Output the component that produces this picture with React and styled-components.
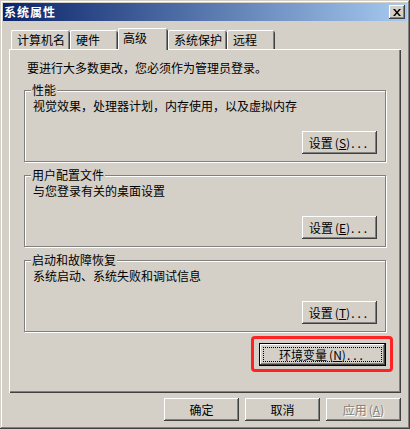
import React from 'react';
import styled, { createGlobalStyle } from 'styled-components';

const FACE = '#d4d0c8';
const FONT = `"Noto Sans CJK SC", "Noto Sans", sans-serif`;

const GlobalStyle = createGlobalStyle`
  html, body {
    margin: 0;
    padding: 0;
    background: ${FACE};
  }
  body {
    font-family: ${FONT};
    font-size: 12px;
    color: #000;
  }
`;

// outer window frame
const Window = styled.div`
  box-sizing: border-box;
  width: 410px;
  height: 429px;
  padding: 3px;
  display: flex;
  flex-direction: column;
  background: ${FACE};
  box-shadow: inset -1px -1px #404040, inset 1px 1px ${FACE},
    inset -2px -2px #808080, inset 2px 2px #fff;
`;

const TitleBar = styled.div`
  height: 18px;
  display: flex;
  align-items: center;
  justify-content: space-between;
  padding: 0 2px 0 1px;
  background: linear-gradient(to right, #0a246a, #a6caf0);
`;

const Title = styled.span`
  color: #fff;
  font-weight: 700;
  font-size: 12px;
  letter-spacing: 1px;
  line-height: 18px;
`;

const CloseButton = styled.div`
  box-sizing: border-box;
  width: 16px;
  height: 14px;
  display: flex;
  align-items: center;
  justify-content: center;
  background: ${FACE};
  box-shadow: inset -1px -1px #404040, inset 1px 1px #fff,
    inset -2px -2px #808080;
`;

const Body = styled.div`
  flex: 1;
  display: flex;
  flex-direction: column;
  padding: 7px 6px 0 6px;
`;

const TabStrip = styled.div`
  position: relative;
  z-index: 1;
  height: 21px;
  display: flex;
  align-items: flex-end;
  padding-left: 2px;
`;

const Tab = styled.div`
  box-sizing: border-box;
  height: ${p => (p.$active ? 22 : 19)}px;
  min-width: ${p => (p.$active ? 50 : 48)}px;
  margin-bottom: ${p => (p.$active ? -1 : 0)}px;
  padding: ${p => (p.$active ? '0 5px 2px 5px' : '0 5px 0 6px')};
  display: flex;
  align-items: center;
  white-space: nowrap;
  line-height: 14px;
  background: ${FACE};
  border-radius: 2px 2px 0 0;
  box-shadow: inset 1px 0 #fff, inset 0 1px #fff, inset -1px 0 #404040,
    inset -2px 0 #808080;
`;

// the tab page
const Panel = styled.div`
  box-sizing: border-box;
  height: 344px;
  display: flex;
  flex-direction: column;
  padding: 12px 15px 0;
  background: ${FACE};
  box-shadow: inset 1px 1px #fff, inset -1px -1px #404040,
    inset -2px -2px #808080;
`;

const Intro = styled.p`
  margin: 0 0 0 3px;
  line-height: 14px;
`;

const Group = styled.fieldset`
  margin: ${p => (p.$first ? 8 : 6)}px 0 0;
  padding: 0;
  min-width: 0;
  border: 1px solid #808080;
  box-shadow: 1px 1px 0 #fff, inset 1px 1px 0 #fff;
`;

const Legend = styled.legend`
  margin-left: 6px;
  padding: 0 1px;
  line-height: 14px;
  background: ${FACE};
`;

const GroupBody = styled.div`
  display: flex;
  flex-direction: column;
  padding: 2px 8px 7px 8px;
`;

const GroupText = styled.div`
  line-height: 14px;
`;

const ButtonRow = styled.div`
  display: flex;
  justify-content: flex-end;
  margin-top: ${p => p.$gap || 0}px;
`;

const Button = styled.button`
  position: relative;
  box-sizing: border-box;
  width: ${p => p.$width || 75}px;
  height: 23px;
  padding: 0;
  display: flex;
  align-items: center;
  justify-content: center;
  font-family: ${FONT};
  font-size: 12px;
  line-height: 14px;
  white-space: nowrap;
  color: ${p => (p.disabled ? '#808080' : '#000')};
  text-shadow: ${p => (p.disabled ? '1px 1px 0 #fff' : 'none')};
  background: ${FACE};
  border: ${p => (p.$default ? '1px solid #000' : 'none')};
  box-shadow: inset -1px -1px #404040, inset 1px 1px #fff,
    inset -2px -2px #808080;

  ${p =>
    p.$default &&
    `&::before {
      content: '';
      position: absolute;
      inset: 3px;
      border: 1px dotted #000;
    }`}
`;

const Mnemonic = styled.span`
  margin-left: 2px;
`;

const Dots = styled.span`
  letter-spacing: 3px;
  margin-left: 1px;
`;

// red annotation drawn around the env vars button
const Highlight = styled.div`
  position: relative;
  display: flex;

  &::after {
    content: '';
    position: absolute;
    inset: -7px -7px -6px -8px;
    border: 3px solid #ff2222;
    border-radius: 4px;
    pointer-events: none;
  }
`;

const Footer = styled.div`
  display: flex;
  justify-content: flex-end;
  gap: 6px;
  margin-top: 5px;
`;

const Key = ({ children }) => (
  <Mnemonic>
    (<u>{children}</u>)
  </Mnemonic>
);

const tabs = ['计算机名', '硬件', '高级', '系统保护', '远程'];

const groups = [
  { title: '性能', text: '视觉效果，处理器计划，内存使用，以及虚拟内存', key: 'S' },
  { title: '用户配置文件', text: '与您登录有关的桌面设置', key: 'E' },
  { title: '启动和故障恢复', text: '系统启动、系统失败和调试信息', key: 'T' },
];

const App = () => (
  <>
    <GlobalStyle />
    <Window>
      <TitleBar>
        <Title>系统属性</Title>
        <CloseButton>
          <svg width="8" height="7" viewBox="0 0 8 7">
            <path d="M0 0h2l2 2.4L6 0h2L5 3.5 8 7H6L4 4.6 2 7H0l3-3.5z" fill="#000" />
          </svg>
        </CloseButton>
      </TitleBar>
      <Body>
        <TabStrip>
          {tabs.map(t => (
            <Tab key={t} $active={t === '高级'}>
              {t}
            </Tab>
          ))}
        </TabStrip>
        <Panel>
          <Intro>要进行大多数更改，您必须作为管理员登录。</Intro>
          {groups.map((g, i) => (
            <Group key={g.title} $first={i === 0}>
              <Legend>{g.title}</Legend>
              <GroupBody>
                <GroupText>{g.text}</GroupText>
                <ButtonRow $gap={18}>
                  <Button>
                    设置<Key>{g.key}</Key>
                    <Dots>...</Dots>
                  </Button>
                </ButtonRow>
              </GroupBody>
            </Group>
          ))}
          <ButtonRow $gap={11}>
            <Highlight>
              <Button $default $width={127}>
                环境变量<Key>N</Key>
                <Dots>...</Dots>
              </Button>
            </Highlight>
          </ButtonRow>
        </Panel>
        <Footer>
          <Button>确定</Button>
          <Button>取消</Button>
          <Button disabled>
            应用<Key>A</Key>
          </Button>
        </Footer>
      </Body>
    </Window>
  </>
);

export default App;
